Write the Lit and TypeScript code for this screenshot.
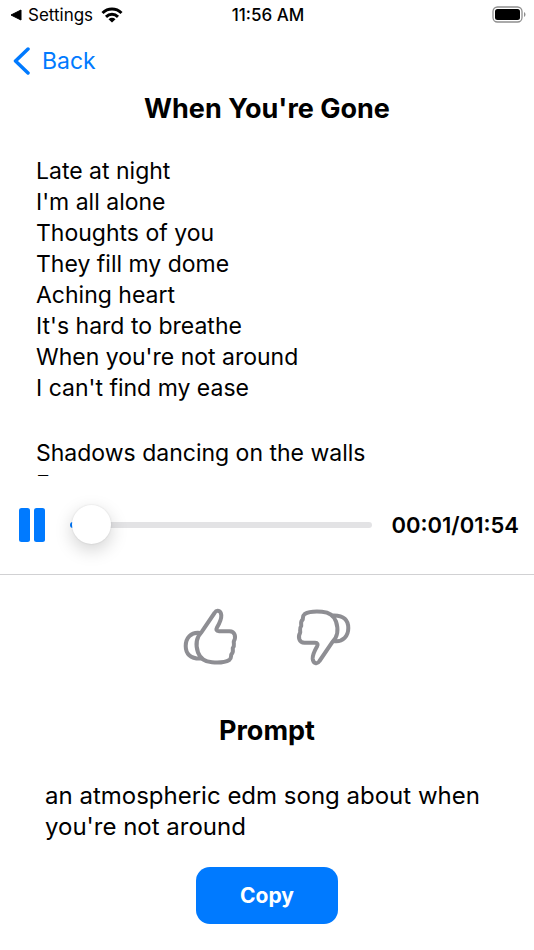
import { LitElement, html, css, svg } from "lit";
import { customElement, property, state } from "lit/decorators.js";
import { styleMap } from "lit/directives/style-map.js";

const thumb = svg`
  <path d="M38.500 10 L25.700 28.800 C20.500 34 19.500 42 22 49.500 C24.500 56.500 29.500 58.800 36 59.300 C42 59.800 50 59 53.300 57 C55.800 55 54.800 53 55.300 51.500 C58 49 56.500 47 56.800 45 C59 42.500 57.500 40.500 57.800 38.500 C60.300 34 59 28.200 53.500 28.200 H43 C40.300 28.200 39.800 26.800 41 24.500 C43.300 20.500 45.500 15.800 45.300 12.300 C44.800 7.300 40.800 6.300 38.500 10 Z"/>
  <path d="M24.500 30 C14.500 28.500 9.700 35.500 9.700 43 C9.700 50.500 14 56 25 55.600"/>`;

@customElement("status-bar")
class StatusBar extends LitElement {
  static styles = css`
    :host {
      display: grid;
      grid-template-columns: 1fr auto 1fr;
      align-items: center;
      height: 30px;
      padding: 0 8px 0 10px;
      font-size: 17px;
    }
    .left {
      display: flex;
      align-items: center;
      gap: 8px;
    }
    .left svg { display: block; }
    a { color: inherit; text-decoration: none; display: flex; align-items: center; gap: 6px; }
    .time { font-weight: 500; }
    .battery { justify-self: end; display: block; }
  `;
  render() {
    return html`
      <div class="left">
        <a href="#settings">
          <svg width="12" height="12" viewBox="0 0 12 12" aria-hidden="true"><path d="M1 6 L11 1 V11 Z" fill="#000" stroke="#000" stroke-linejoin="round"/></svg>
          Settings
        </a>
        <svg width="22" height="16" viewBox="0 0 22 16" aria-label="Wi-Fi" role="img">
          <g fill="none" stroke="#000" stroke-width="3">
            <path d="M1.500 6 C7 .8 15 .8 20.500 6"/>
            <path d="M5 9.800 C8.500 6.500 13.500 6.500 17 9.800"/>
          </g>
          <path d="M11 15.500 L7.500 12.200 C9.500 10.400 12.500 10.400 14.500 12.200 Z"/>
        </svg>
      </div>
      <span class="time">11:56 AM</span>
      <svg class="battery" width="34" height="18" viewBox="0 0 34 18" role="img" aria-label="Battery full">
        <rect x="1" y="1" width="29" height="15" rx="4.500" fill="none" stroke="#8e8e8e" stroke-width="1.300"/>
        <rect x="3" y="3" width="25" height="11" rx="2.500"/>
        <path d="M32 6 C34 7 34 10 32 11 Z" fill="#8e8e8e"/>
      </svg>
    `;
  }
}

@customElement("song-player")
class SongPlayer extends LitElement {
  @property({ type: Number }) duration = 114;
  @state() private position = 1;

  static styles = css`
    :host {
      display: flex;
      align-items: center;
      height: 98px;
      padding: 0 15px 0 18px;
      border-bottom: 1px solid #d1d1d3;
    }
    button {
      border: 0;
      padding: 0;
      margin-right: 24px;
      background: none;
      cursor: pointer;
    }
    button svg { display: block; }
    input {
      appearance: none;
      flex: 1;
      min-width: 0;
      height: 40px;
      margin: 0 19px 0 0;
      background: none;
    }
    input::-webkit-slider-runnable-track {
      height: 6px;
      border-radius: 3px;
      background: linear-gradient(to right, #007aff var(--played), #e3e3e5 var(--played));
    }
    input::-webkit-slider-thumb {
      appearance: none;
      width: 39px;
      height: 39px;
      margin-top: -17px;
      border-radius: 50%;
      background: #fff;
      box-shadow: 0 0 2px rgba(0, 0, 0, 0.12), 0 6px 18px rgba(0, 0, 0, 0.18);
    }
    output {
      font-size: 22px;
      font-weight: 600;
      white-space: nowrap;
    }
  `;

  private clock(seconds: number) {
    const two = (n: number) => String(n).padStart(2, "0");
    return `${two(Math.floor(seconds / 60))}:${two(seconds % 60)}`;
  }

  render() {
    return html`
      <button aria-label="Pause">
        <svg width="28" height="36" viewBox="0 0 28 36" fill="#007aff"><rect x="1" y="1" width="11" height="34" rx="2.500"/><rect x="16" y="1" width="11" height="34" rx="2.500"/></svg>
      </button>
      <input type="range" aria-label="Position" min="0" max=${this.duration} .value=${String(this.position)}
        style=${styleMap({ "--played": `${(this.position / this.duration) * 100}%` })}
        @input=${(e: Event) => (this.position = Number((e.target as HTMLInputElement).value))} />
      <output>${this.clock(this.position)}/${this.clock(this.duration)}</output>
    `;
  }
}

@customElement("app-root")
class AppRoot extends LitElement {
  private stanzas = [
    ["Late at night", "I'm all alone", "Thoughts of you", "They fill my dome", "Aching heart", "It's hard to breathe", "When you're not around", "I can't find my ease"],
    ["Shadows dancing on the walls", "Empty rooms"],
  ];

  static styles = css`
    :host {
      display: block;
      min-height: 100vh;
      background: #fff;
      color: #000;
      font-family: Inter, "Liberation Sans", sans-serif;
    }
    nav {
      display: flex;
      height: 61px;
      align-items: center;
      padding: 0 13px;
    }
    .back {
      display: flex;
      align-items: center;
      gap: 12px;
      color: #007aff;
      font-size: 23px;
      text-decoration: none;
    }
    h1, h2 {
      margin: 0;
      font-size: 27px;
      line-height: 36px;
      font-weight: 700;
      text-align: center;
    }
    .lyrics {
      box-sizing: border-box;
      height: 320px;
      margin-top: 29px;
      padding: 0 36px;
      overflow: hidden;
      font-size: 23px;
      line-height: 31px;
    }
    .lyrics p { margin: 0 0 34px; white-space: pre-line; }
    .votes {
      display: flex;
      justify-content: center;
      gap: 46px;
      padding: 28px 0 42px;
    }
    .votes button {
      border: 0;
      padding: 0;
      background: none;
      cursor: pointer;
    }
    .votes svg {
      display: block;
      fill: none;
      stroke: #8e8e93;
      stroke-width: 4;
      stroke-linecap: round;
      stroke-linejoin: round;
    }
    .prompt {
      margin: 31px 45px 25px;
      font-size: 24px;
      line-height: 31px;
    }
    .copy {
      display: block;
      width: 142px;
      height: 57px;
      margin: 0 auto;
      border: 0;
      border-radius: 14px;
      background: #007aff;
      color: #fff;
      font: 700 21px Inter, "Liberation Sans", sans-serif;
      cursor: pointer;
    }
  `;

  render() {
    return html`
      <status-bar></status-bar>
      <nav>
        <a class="back" href="#back">
          <svg width="17" height="28" viewBox="0 0 17 28" fill="none" stroke="#007aff" stroke-width="3.500" stroke-linecap="round" stroke-linejoin="round" aria-hidden="true"><path d="M15 2 L2.500 14 L15 26"/></svg>
          Back
        </a>
      </nav>
      <h1>When You're Gone</h1>
      <div class="lyrics">${this.stanzas.map((lines) => html`<p>${lines.join("\n")}</p>`)}</div>
      <song-player></song-player>
      <div class="votes">
        <button aria-label="Like"><svg width="68" height="68" viewBox="0 0 68 68">${thumb}</svg></button>
        <button aria-label="Dislike"><svg width="68" height="68" viewBox="0 0 68 68"><g transform="rotate(180 34 34)">${thumb}</g></svg></button>
      </div>
      <h2>Prompt</h2>
      <p class="prompt">an atmospheric edm song about when you're not around</p>
      <button class="copy">Copy</button>
    `;
  }
}
